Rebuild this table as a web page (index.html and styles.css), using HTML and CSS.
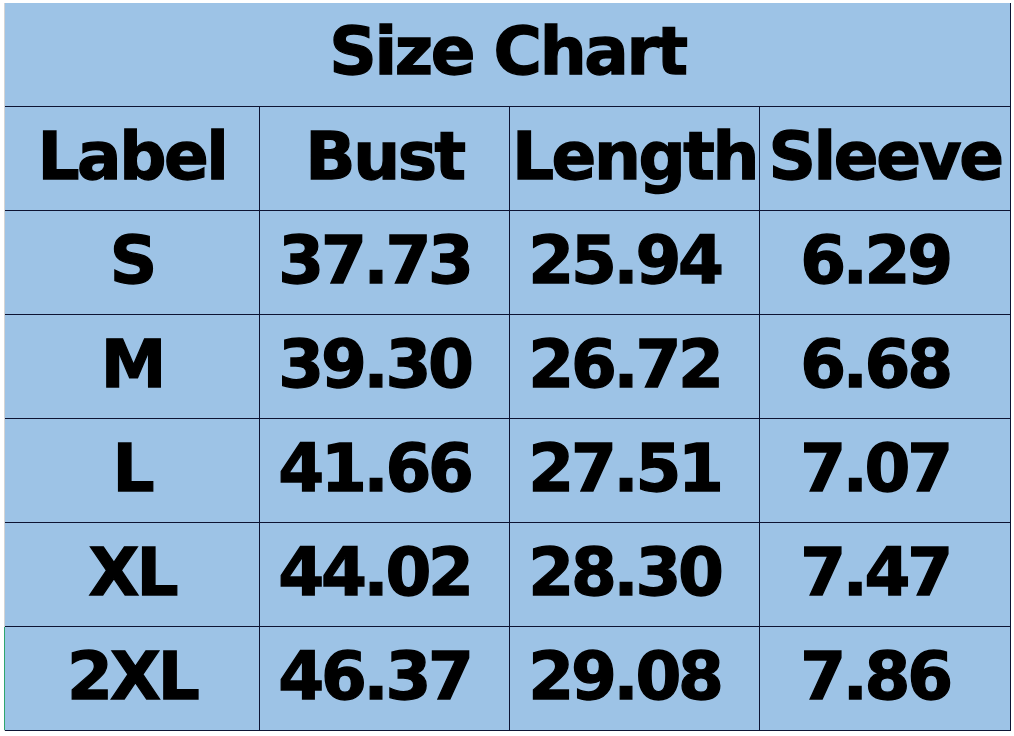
FILE: index.html
```html
<!DOCTYPE html>
<html>
<head>
<meta charset="utf-8">
<link rel="stylesheet" href="styles.css">
</head>
<body>
<div class="page">
  <div class="sheet">
    <div class="cell title">Size Chart</div>
    <div class="cell head">Label</div>
    <div class="cell head">Bust</div>
    <div class="cell head">Length</div>
    <div class="cell head last">Sleeve</div>

    <div class="cell label">S</div>
    <div class="cell num">37.73</div>
    <div class="cell num">25.94</div>
    <div class="cell num last">6.29</div>

    <div class="cell label">M</div>
    <div class="cell num">39.30</div>
    <div class="cell num">26.72</div>
    <div class="cell num last">6.68</div>

    <div class="cell label">L</div>
    <div class="cell num">41.66</div>
    <div class="cell num">27.51</div>
    <div class="cell num last">7.07</div>

    <div class="cell label">XL</div>
    <div class="cell num">44.02</div>
    <div class="cell num">28.30</div>
    <div class="cell num last">7.47</div>

    <div class="cell label selected">2XL</div>
    <div class="cell num">46.37</div>
    <div class="cell num">29.08</div>
    <div class="cell num last">7.86</div>
  </div>
</div>
</body>
</html>
```

FILE: styles.css
```css
html, body {
  margin: 0;
  padding: 0;
  background: #ffffff;
}

.page {
  padding: 3px 0 0 4px;
  width: 1014px;
  height: 736px;
  box-sizing: border-box;
}

.sheet {
  display: grid;
  grid-template-columns: 255px 250px 250px 251px;
  grid-auto-rows: 104px;
  width: 1006px;
  background: #9dc3e6;
  border-left: 1px solid #d4d4d4;
  box-sizing: border-box;
  font-family: "DejaVu Sans", sans-serif;
  font-weight: bold;
  color: #000;
}

.cell {
  display: flex;
  align-items: center;
  justify-content: center;
  box-sizing: border-box;
  border-right: 1px solid #0d1433;
  border-bottom: 1px solid #0d1433;
  font-size: 66px;
  line-height: 1;
  padding-bottom: 3px;
  white-space: nowrap;
  overflow: visible;
  -webkit-text-stroke: 1.3px #000;
}

.title {
  grid-column: 1 / span 4;
  letter-spacing: -2.4px;
  padding-bottom: 5px;
}

.head {
  letter-spacing: -2.4px;
}

.label {
  letter-spacing: -3px;
}

.num {
  letter-spacing: -3.3px;
  padding-right: 20px;
}

.selected {
  position: relative;
}

.selected::before {
  content: "";
  position: absolute;
  left: -1px;
  top: 0;
  bottom: 0;
  width: 1px;
  background: #2fa56f;
}
```
